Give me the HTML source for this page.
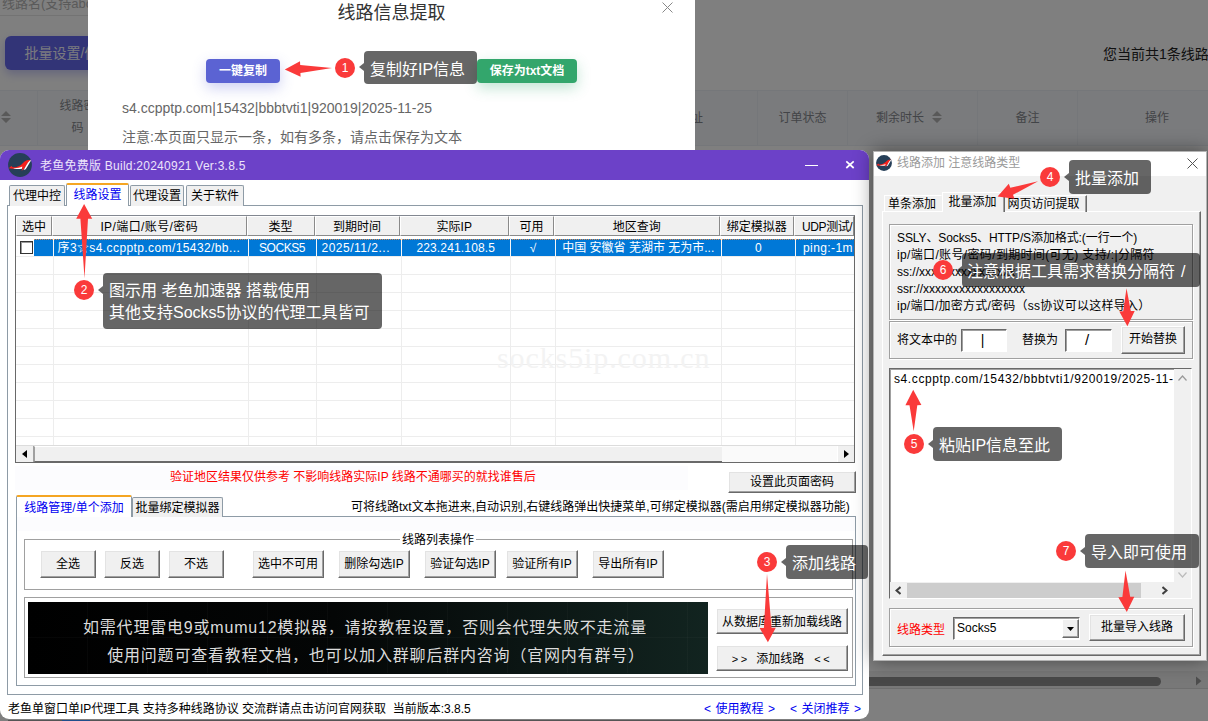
<!DOCTYPE html>
<html lang="zh-CN">
<head>
<meta charset="utf-8">
<title>线路信息提取</title>
<style>
*{box-sizing:border-box;margin:0;padding:0}
html,body{width:1208px;height:721px;overflow:hidden;background:#fff}
body{position:relative;font-family:"Liberation Sans","Noto Sans CJK SC",sans-serif;font-size:12px;color:#000}
.abs{position:absolute}
.nw{white-space:nowrap}
/* ---------- web page ---------- */
#web{position:absolute;left:0;top:0;width:1208px;height:721px;background:#fff;overflow:hidden}
#mask{position:absolute;left:0;top:0;width:1208px;height:721px;background:rgba(0,0,0,.5)}
.th{position:absolute;top:90px;height:56px;border-right:1px solid #ebeef5;color:#85888e;font-size:12px;text-align:center;line-height:56px}
/* ---------- modal ---------- */
#modal{position:absolute;left:88px;top:0;width:607px;height:160px;background:#fff}
/* ---------- win app generic ---------- */
.win{font-family:"Liberation Sans","Noto Sans CJK SC",sans-serif;font-size:12px;line-height:16px;color:#000}
.btn{position:absolute;background:#f0f0f0;border:1px solid;border-color:#fff #696969 #696969 #fff;box-shadow:inset -1px -1px 0 #a0a0a0,inset 1px 1px 0 #e3e3e3;text-align:center;white-space:nowrap;font-size:12px}
.tab{position:absolute;background:#f0f0f0;border:1px solid #8e9ba6;border-bottom:none;border-radius:2px 2px 0 0;text-align:center;white-space:nowrap;font-size:12px}
.hd{position:absolute;top:0;height:20px;line-height:20px;font-size:12px;white-space:nowrap;overflow:hidden;background:#f0f0f0;border-left:1px solid #fff;border-right:1px solid #8a8a8a;border-top:1px solid #fff;border-bottom:1px solid #8a8a8a}
.cl{position:absolute;top:23px;height:17px;line-height:18px;font-size:12px;white-space:nowrap;overflow:hidden;color:#fff;border-left:1px solid #f6f6f6}
/* ---------- annotations ---------- */
.tip{position:absolute;background:rgba(0,0,0,.6);color:#fff;border-radius:4px;font-size:16px;line-height:32px;padding:3px 0 0 6px;white-space:nowrap;font-family:"Liberation Sans","Noto Sans CJK SC",sans-serif}
.tip:before{content:"";position:absolute;left:-5px;top:50%;margin-top:-4.5px;border:4.5px solid transparent;border-left:none;border-right:5px solid rgba(0,0,0,.6)}
.tip.two:before{top:17px}
.num{position:absolute;width:20px;height:20px;border-radius:50%;background:#fa3a3a;color:#fff;font-size:12px;line-height:20px;text-align:center;font-family:"Liberation Sans",sans-serif}
</style>
</head>
<body>
<!-- ================= WEB PAGE (dimmed) ================= -->
<div id="web">
  <div class="abs nw" style="left:2px;top:-7px;font-size:13px;color:#b5b5b5">线路名(支持abc</div>
  <div class="abs" style="left:0;top:15px;width:200px;height:1px;background:#e6e6e6"></div>
  <div class="abs nw" style="left:5px;top:36px;width:140px;height:34px;border-radius:6px;background:#6468ee;color:#f4f4ff;font-size:14px;line-height:34px;padding-left:19.5px;box-shadow:0 4px 10px rgba(100,104,238,.35)">批量设置/修改</div>
  <div class="abs nw" style="left:1103px;top:43px;font-size:14px;color:#222">您当前共1条线路</div>
  <div class="abs" style="left:0;top:90px;width:1208px;height:56px;background:#f5f7fa;border-top:1px solid #ebeef5;border-bottom:1px solid #ebeef5"></div>
  <div class="th" style="left:0;width:38px"></div>
  <div class="th" style="left:38px;width:80px;line-height:22px;padding-top:5px">线路密<br>码</div>
  <div class="th" style="left:601px;width:157px;text-align:left;padding-left:78px">地址</div>
  <div class="th" style="left:758px;width:90px">订单状态</div>
  <div class="th" style="left:848px;width:130px;text-align:left;padding-left:28px">剩余时长</div>
  <div class="th" style="left:978px;width:100px">备注</div>
  <div class="th" style="left:1077px;width:160px;border:none">操作</div>
  <!-- sort carets -->
  <svg class="abs" style="left:1px;top:111px" width="10" height="12"><path d="M0 5 L5 0 L10 5Z M0 7 L5 12 L10 7Z" fill="#b2b2b2"/></svg>
  <svg class="abs" style="left:932px;top:111px" width="10" height="12"><path d="M0 5 L5 0 L10 5Z M0 7 L5 12 L10 7Z" fill="#b2b2b2"/></svg>
  <!-- horizontal scrollbar -->
  <div class="abs" style="left:0;top:671px;width:1208px;height:17px;background:#f1f1f1"></div>
  <div class="abs" style="left:600px;top:677px;width:561px;height:9px;border-radius:5px;background:#909090"></div>
  <svg class="abs" style="left:1196px;top:676px" width="6" height="10"><path d="M0 0.5 L5.5 5 L0 9.5Z" fill="#9a9a9a"/></svg>
  <div class="abs" style="left:0;top:688px;width:1208px;height:1px;background:#dcdcdc"></div>
</div>
<div id="mask"></div>
<div class="abs" style="left:8px;top:720px;width:852px;height:1px;background:#555"></div>
<div class="abs" style="left:62px;top:720px;width:28px;height:1px;background:#1f4e8c"></div>

<!-- ================= MODAL ================= -->
<div id="modal">
  <div class="abs nw" style="left:0;width:607px;top:-2px;text-align:center;font-size:18px;color:#333">线路信息提取</div>
  <svg class="abs" style="left:574px;top:2px" width="11" height="11"><path d="M0.5 0.5 L10.5 10.5 M10.5 0.5 L0.5 10.5" stroke="#888" stroke-width="1" fill="none"/></svg>
  <div class="abs nw" style="left:118px;top:59px;width:74px;height:24px;border-radius:4px;background:#5b63d3;color:#fff;font-size:12px;font-weight:bold;line-height:24px;text-align:center;box-shadow:0 5px 14px rgba(91,99,211,.3)">一键复制</div>
  <div class="abs nw" style="left:389px;top:59px;width:100px;height:24px;border-radius:4px;background:#33a66c;color:#fff;font-size:12px;font-weight:bold;line-height:24px;text-align:center;box-shadow:0 5px 14px rgba(51,166,108,.3)">保存为txt文档</div>
  <div class="abs nw" style="left:34px;top:98px;font-size:14px;color:#666;line-height:20px">s4.ccpptp.com|15432|bbbtvti1|920019|2025-11-25</div>
  <div class="abs nw" style="left:34px;top:127px;font-size:14px;color:#666;line-height:20px">注意:本页面只显示一条，如有多条，请点击保存为文本</div>
</div>

<!-- ================= MAIN WINDOW ================= -->
<div id="mw" class="win abs" style="left:0;top:150px;width:869px;height:569px;background:#fff;border-radius:9px 9px 9px 9px;overflow:hidden">
  <!-- title bar -->
  <div class="abs" style="left:0;top:0;width:869px;height:30px;background:#6c41c8"></div>
  <svg class="abs" style="left:8px;top:3px" width="24" height="24" viewBox="0 0 24 24">
    <circle cx="12" cy="12" r="11.9" fill="#263f58"/>
    <path d="M0.8 15.2 L3.3 12.9 L4.7 14.2 C8 14.5 11 13.5 13.5 11.4 C15.5 9.5 17.5 7.3 20 7 L22.9 7 C20.5 8.6 19 11 17.6 13.6 C16.6 15.5 15.6 17 13.5 17.7 L14.5 15.6 C10 16.4 5 15.9 0.8 15.2Z" fill="#f5201c"/>
    <path d="M23.2 7.3 C21.2 10 19.7 13.5 17.7 16.3 L15.6 16.9 C17.6 14 19.2 10 21.8 7.6Z" fill="#fff"/>
    <path d="M5.2 15 C8 15.2 11.5 15 14.3 13.6 L13.9 15.7 C10 16.3 7 16 5.2 15Z" fill="#fff"/>
  </svg>
  <div class="abs nw" style="left:40px;top:8px;font-size:12px;color:#ece4fb;letter-spacing:.25px">老鱼免费版 Build:20240921 Ver:3.8.5</div>
  <div class="abs" style="left:805px;top:15px;width:13px;height:1px;background:#fff"></div>
  <svg class="abs" style="left:845px;top:10px" width="10" height="10"><path d="M1.3 1.4 L8.7 8 M8.7 1.4 L1.3 8" stroke="#fff" stroke-width="1.7" fill="none"/></svg>

  <!-- outer tab panel -->
  <div class="abs" style="left:7px;top:55px;width:856px;height:490px;border:1px solid #8e9ba6;background:#fff"></div>
  <!-- tabs -->
  <div class="tab" style="left:9px;top:35px;width:56px;height:21px;line-height:20px">代理中控</div>
  <div class="tab" style="left:130px;top:35px;width:54px;height:21px;line-height:20px">代理设置</div>
  <div class="tab" style="left:186px;top:35px;width:58px;height:21px;line-height:20px">关于软件</div>
  <div class="tab" style="left:66px;top:33px;width:63px;height:23px;line-height:21px;background:#fff;color:#0000f0;border-top:2px solid #f5a623">线路设置</div>

  <!-- list view -->
  <div id="lv" class="abs" style="left:15px;top:65px;width:840px;height:248px;border:1px solid #696969;border-top-color:#828790;background:#fff;overflow:hidden">
    <!-- header -->
    <div class="abs" style="left:0;top:0;width:838px;height:20px;background:#f0f0f0;border-bottom:1px solid #8a8a8a"></div>
    <!-- grid -->
    <div class="abs" style="left:0;top:23px;width:838px;height:207px;background:
      repeating-linear-gradient(to bottom,transparent 0,transparent 17px,#ededed 17px,#ededed 18px)"></div>
    <!-- row selected -->
    <div class="abs" style="left:18px;top:23px;width:820px;height:17px;background:#0078d7"></div>
    <div class="abs" style="left:18px;top:23px;width:820px;height:1px;background:repeating-linear-gradient(to right,#e08a4a 0,#e08a4a 1px,#0078d7 1px,#0078d7 2px)"></div>
    <div class="abs" style="left:4px;top:25px;width:13px;height:13px;border:1px solid #333;box-shadow:inset 1px 1px 0 #999;background:#fff"></div>
    <div class="hd" style="left:0px;width:36px;text-align:center;">选中</div>
    <div class="hd" style="left:36px;width:194.5px;text-align:center;letter-spacing:.4px">IP/端口/账号/密码</div>
    <div class="abs" style="left:37px;top:22px;width:1px;height:208px;background:#ededed"></div>
    <div class="cl" style="left:37px;width:194.5px;text-align:left;padding-left:3.5px;letter-spacing:0.4px">序3☆s4.ccpptp.com/15432/bb...</div>
    <div class="hd" style="left:230.5px;width:68.0px;text-align:center;">类型</div>
    <div class="abs" style="left:231.5px;top:22px;width:1px;height:208px;background:#ededed"></div>
    <div class="cl" style="left:231.5px;width:68px;text-align:center;letter-spacing:-.45px">SOCKS5</div>
    <div class="hd" style="left:298.5px;width:85.0px;text-align:center;">到期时间</div>
    <div class="abs" style="left:299.5px;top:22px;width:1px;height:208px;background:#ededed"></div>
    <div class="cl" style="left:299.5px;width:85px;text-align:left;padding-left:5px;letter-spacing:.5px">2025/11/2...</div>
    <div class="hd" style="left:383.5px;width:109.5px;text-align:center;">实际IP</div>
    <div class="abs" style="left:384.5px;top:22px;width:1px;height:208px;background:#ededed"></div>
    <div class="cl" style="left:384.5px;width:109.5px;text-align:center;letter-spacing:.15px">223.241.108.5</div>
    <div class="hd" style="left:493px;width:45px;text-align:center;">可用</div>
    <div class="abs" style="left:494px;top:22px;width:1px;height:208px;background:#ededed"></div>
    <div class="cl" style="left:494px;width:45px;text-align:center;">√</div>
    <div class="hd" style="left:538px;width:165.5px;text-align:center;">地区查询</div>
    <div class="abs" style="left:539px;top:22px;width:1px;height:208px;background:#ededed"></div>
    <div class="cl" style="left:539px;width:165.5px;text-align:center;">中国 安徽省 芜湖市 无为市...</div>
    <div class="hd" style="left:703.5px;width:74.5px;text-align:center;">绑定模拟器</div>
    <div class="abs" style="left:704.5px;top:22px;width:1px;height:208px;background:#ededed"></div>
    <div class="cl" style="left:704.5px;width:74.5px;text-align:center;">0</div>
    <div class="hd" style="left:778px;width:60px;text-align:left;padding-left:7px;letter-spacing:-0.4px">UDP测试/</div>
    <div class="abs" style="left:779px;top:22px;width:1px;height:208px;background:#ededed"></div>
    <div class="cl" style="left:779px;width:60px;text-align:left;padding-left:7px;letter-spacing:0.4px">ping:-1m</div>
    <!-- watermark -->
    <div class="abs nw" style="left:481px;top:134px;font-family:'Liberation Serif',serif;font-size:30px;color:#f3f3f3;letter-spacing:.9px">socks5ip.com.cn</div>
    <!-- hscroll -->
    <div class="abs" style="left:0;top:229px;width:838px;height:17px;background:#f0f0f0;border-top:1px solid #dcdcdc"></div>
    <div class="abs" style="left:18px;top:230px;width:689px;height:16px;background:#f0f0f0;border:1px solid;border-color:#fff #696969 #696969 #a0a0a0"></div>
    <div class="abs" style="left:706px;top:230px;width:115px;height:16px;background:#fafafa"></div>
    <div class="abs" style="left:0;top:230px;width:18px;height:16px;background:#f0f0f0;border-right:1px solid #a0a0a0"></div>
    <div class="abs" style="left:821px;top:230px;width:17px;height:16px;background:#f0f0f0;border-left:1px solid #fff"></div>
    <svg class="abs" style="left:6px;top:234px" width="5" height="8"><path d="M5 0 L0 4 L5 8Z" fill="#000"/></svg>
    <svg class="abs" style="left:828px;top:234px" width="5" height="8"><path d="M0 0 L5 4 L0 8Z" fill="#000"/></svg>
  </div>

  <!-- red note -->
  <div class="abs" style="left:15px;top:316px;width:673px;height:24px;background:#fcfcfe"></div>
  <div class="abs nw" style="left:170px;top:319px;font-size:12px;color:#f00">验证地区结果仅供参考 不影响线路实际IP 线路不通哪买的就找谁售后</div>
  <div class="btn" style="left:728px;top:321px;width:128px;height:22px;line-height:20px;font-size:12px">设置此页面密码</div>

  <!-- inner tab control -->
  <div class="abs" style="left:16px;top:366px;width:840px;height:170px;border:1px solid #8e9ba6;background:#fff"></div>
  <div class="abs" style="left:17px;top:367px;width:838px;height:14px;background:#fcfcfe"></div>
  <div class="tab" style="left:132px;top:347px;width:91px;height:20px;line-height:21px;font-size:12px">批量绑定模拟器</div>
  <div class="tab" style="left:16px;top:345px;width:116px;height:22px;line-height:22px;background:#fff;color:#0000f0;border-top:2px solid #f5a623;font-size:12px">线路管理/单个添加</div>
  <div class="abs nw" style="left:351px;top:349px;font-size:12px">可将线路txt文本拖进来,自动识别,右键线路弹出快捷菜单,可绑定模拟器(需启用绑定模拟器功能)</div>

  <!-- group box 1 -->
  <div class="abs" style="left:24px;top:389px;width:829px;height:51px;border:1px solid #a0a0a0;box-shadow:1px 1px 0 #fff,inset 1px 1px 0 #fff"></div>
  <div class="abs nw" style="left:400px;top:382px;background:#fff;padding:0 2px;font-size:12px">线路列表操作</div>
  <div class="btn" style="left:40px;top:400px;width:56px;height:28px;line-height:27px">全选</div>
  <div class="btn" style="left:104px;top:400px;width:56px;height:28px;line-height:27px">反选</div>
  <div class="btn" style="left:168px;top:400px;width:56px;height:28px;line-height:27px">不选</div>
  <div class="btn" style="left:252px;top:400px;width:72px;height:28px;line-height:27px">选中不可用</div>
  <div class="btn" style="left:338px;top:400px;width:72px;height:28px;line-height:27px">删除勾选IP</div>
  <div class="btn" style="left:424px;top:400px;width:72px;height:28px;line-height:27px">验证勾选IP</div>
  <div class="btn" style="left:506px;top:400px;width:72px;height:28px;line-height:27px">验证所有IP</div>
  <div class="btn" style="left:592px;top:400px;width:72px;height:28px;line-height:27px">导出所有IP</div>

  <!-- group box 2 -->
  <div class="abs" style="left:24px;top:447px;width:829px;height:81px;border:1px solid #a0a0a0;box-shadow:1px 1px 0 #fff,inset 1px 1px 0 #fff"></div>
  <div class="abs" style="left:28px;top:452px;width:680px;height:72px;background:linear-gradient(to right,#000 0,#040606 45%,#122420 100%);overflow:hidden">
    <div class="abs" style="left:0;top:0;width:680px;height:71px;background:
      repeating-linear-gradient(to right,transparent 0,transparent 59px,rgba(255,255,255,.022) 59px,rgba(255,255,255,.022) 60px),
      repeating-linear-gradient(to bottom,transparent 0,transparent 35px,rgba(255,255,255,.022) 35px,rgba(255,255,255,.022) 36px)"></div>
    <div class="abs nw" style="left:0;top:14px;width:674px;text-align:center;font-size:16px;line-height:24px;color:#dcdcdc;letter-spacing:.8px">如需代理雷电9或mumu12模拟器，请按教程设置，否则会代理失败不走流量</div>
    <div class="abs nw" style="left:0;top:42px;width:696px;text-align:center;font-size:16px;line-height:24px;color:#dcdcdc;letter-spacing:.8px">使用问题可查看教程文档，也可以加入群聊后群内咨询（官网内有群号）</div>
  </div>
  <div class="btn" style="left:716px;top:458px;width:132px;height:26px;line-height:26px">从数据库重新加载线路</div>
  <div class="btn" style="left:716px;top:495px;width:132px;height:26px;line-height:26px"><span style="letter-spacing:2.5px;font-size:11px">&gt;&gt;</span>&nbsp;&nbsp;添加线路&nbsp;&nbsp;&nbsp;<span style="letter-spacing:2.5px;font-size:11px">&lt;&lt;</span></div>

  <!-- status bar -->
  <div class="abs nw" style="left:8px;top:551px;font-size:12px">老鱼单窗口单IP代理工具 支持多种线路协议 交流群请点击访问官网获取&nbsp; 当前版本:3.8.5</div>
  <div class="abs nw" style="left:704px;top:551px;font-size:12px;color:#0000f0;word-spacing:1.2px">&lt; 使用教程 &gt;</div>
  <div class="abs nw" style="left:790px;top:551px;font-size:12px;color:#0000f0;word-spacing:1.2px">&lt; 关闭推荐 &gt;</div>
</div>

<!--MAINWIN_END-->
<!-- ================= RIGHT WINDOW ================= -->
<div id="rw" class="win abs" style="left:873px;top:151px;width:334px;height:510px;background:#f0f0f0;box-shadow:0 0 18px rgba(0,0,0,.45);border:1px solid #b4b4b4">
  <div class="abs" style="left:0;top:0;width:332px;height:24px;background:#fff"></div>
  <svg class="abs" style="left:2px;top:3px" width="16" height="16" viewBox="0 0 24 24">
    <circle cx="12" cy="12" r="11.9" fill="#263f58"/>
    <path d="M0.8 15.2 L3.3 12.9 L4.7 14.2 C8 14.5 11 13.5 13.5 11.4 C15.5 9.5 17.5 7.3 20 7 L22.9 7 C20.5 8.6 19 11 17.6 13.6 C16.6 15.5 15.6 17 13.5 17.7 L14.5 15.6 C10 16.4 5 15.9 0.8 15.2Z" fill="#f5201c"/>
    <path d="M23.2 7.3 C21.2 10 19.7 13.5 17.7 16.3 L15.6 16.9 C17.6 14 19.2 10 21.8 7.6Z" fill="#fff"/>
    <path d="M5.2 15 C8 15.2 11.5 15 14.3 13.6 L13.9 15.7 C10 16.3 7 16 5.2 15Z" fill="#fff"/>
  </svg>
  <div class="abs nw" style="left:23px;top:3px;font-size:12px;color:#9a9a9a">线路添加 注意线路类型</div>
  <svg class="abs" style="left:313px;top:6px" width="11" height="11"><path d="M0.5 0.5 L10.5 10.5 M10.5 0.5 L0.5 10.5" stroke="#555" stroke-width="1" fill="none"/></svg>

  <!-- tab panel -->
  <div class="abs" style="left:8px;top:59px;width:319px;height:445px;border:1px solid;border-color:#fff #696969 #696969 #fff;box-shadow:inset -1px -1px 0 #a0a0a0"></div>
  <!-- tabs -->
  <div class="abs nw" style="left:10px;top:43px;width:58px;height:17px;border:1px solid;border-color:#fff transparent transparent #fff;padding-right:2px;border-bottom:none;font-size:12px;line-height:16px;text-align:center">单条添加</div>
  <div class="abs nw" style="left:130px;top:43px;width:83px;height:17px;padding-right:4px;border:1px solid;border-color:#fff #696969 transparent #fff;border-bottom:none;font-size:12px;line-height:16px;text-align:center;box-shadow:inset -1px 0 0 #a0a0a0">网页访问提取</div>
  <div class="abs nw" style="left:68px;top:40px;width:63px;height:20px;padding-right:2px;background:#f0f0f0;border:1px solid;border-color:#fff #696969 transparent #fff;border-bottom:none;font-size:12px;line-height:18px;text-align:center;box-shadow:inset -1px 0 0 #a0a0a0">批量添加</div>

  <!-- group 1 -->
  <div class="abs" style="left:15px;top:72px;width:304px;height:96px;border:1px solid #a0a0a0;box-shadow:1px 1px 0 #fff,inset 1px 1px 0 #fff"></div>
  <div class="abs nw" style="left:23px;top:78px;font-size:12px;line-height:17px"><span style="letter-spacing:-.1px">SSLY、Socks5、HTTP/S添加格式:(一行一个)</span><br><span style="letter-spacing:.35px">ip/端口/账号/密码/到期时间(可无) 支持/:|分隔符</span><br>ss://xxxxxxxxxxxxxxxx<br>ssr://xxxxxxxxxxxxxxxxx<br><span style="letter-spacing:.25px">ip/端口/加密方式/密码（ss协议可以这样导入）</span></div>

  <!-- group 2 -->
  <div class="abs" style="left:15px;top:169px;width:304px;height:38px;border:1px solid #a0a0a0;box-shadow:1px 1px 0 #fff,inset 1px 1px 0 #fff"></div>
  <div class="abs nw" style="left:23px;top:180px;font-size:12px">将文本中的</div>
  <div class="abs" style="left:87px;top:177px;width:46px;height:23px;background:#fff;border:1px solid;border-color:#696969 #fff #fff #696969;box-shadow:inset 1px 1px 0 #a0a0a0;text-align:center;line-height:20px;font-size:14px;padding-right:3px">|</div>
  <div class="abs nw" style="left:148px;top:180px;font-size:12px">替换为</div>
  <div class="abs" style="left:191px;top:177px;width:47px;height:23px;background:#fff;border:1px solid;border-color:#696969 #fff #fff #696969;box-shadow:inset 1px 1px 0 #a0a0a0;text-align:center;line-height:20px;font-size:15px;padding-right:3px">/</div>
  <div class="btn" style="left:247px;top:174px;width:64px;height:28px;line-height:25px">开始替换</div>

  <!-- textarea -->
  <div class="abs" style="left:15px;top:216px;width:303px;height:231px;background:#fff;border:1px solid;border-color:#696969 #fff #fff #696969;box-shadow:inset 1px 1px 0 #a0a0a0;overflow:hidden">
    <div class="abs nw" style="left:4px;top:2px;font-size:12px;letter-spacing:.6px">s4.ccpptp.com/15432/bbbtvti1/920019/2025-11-25</div>
    <div class="abs" style="left:284px;top:0;width:17px;height:213px;background:#f0f0f0"></div>
    <div class="abs" style="left:0;top:213px;width:301px;height:17px;background:#f0f0f0"></div>
    <div class="abs" style="left:17px;top:214px;width:234px;height:15px;background:#cdcdcd"></div>
    <svg class="abs" style="left:288px;top:6px" width="9" height="6"><path d="M0.5 5.5 L4.5 1 L8.5 5.5" stroke="#999" stroke-width="1.2" fill="none"/></svg>
    <svg class="abs" style="left:288px;top:203px" width="9" height="6"><path d="M0.5 0.5 L4.5 5 L8.5 0.5" stroke="#bbb" stroke-width="1.2" fill="none"/></svg>
    <svg class="abs" style="left:5px;top:217px" width="6" height="9"><path d="M5.5 1 L1.5 4.5 L5.5 8" stroke="#404040" stroke-width="2" fill="none"/></svg>
    <svg class="abs" style="left:272px;top:217px" width="6" height="9"><path d="M0.5 1 L4.5 4.5 L0.5 8" stroke="#404040" stroke-width="2" fill="none"/></svg>
  </div>

  <!-- group 3 -->
  <div class="abs" style="left:15px;top:456px;width:304px;height:39px;border:1px solid #a0a0a0;box-shadow:1px 1px 0 #fff,inset 1px 1px 0 #fff"></div>
  <div class="abs nw" style="left:23px;top:470px;font-size:12px;color:#f00">线路类型</div>
  <div class="abs" style="left:79px;top:465px;width:127px;height:23px;background:#fff;border:1px solid;border-color:#696969 #fff #fff #696969;box-shadow:inset 1px 1px 0 #a0a0a0">
    <div class="abs nw" style="left:3px;top:2px;font-size:12px">Socks5</div>
    <div class="abs" style="left:108px;top:1px;width:17px;height:19px;background:#f0f0f0;border:1px solid;border-color:#fff #696969 #696969 #fff;box-shadow:inset -1px -1px 0 #a0a0a0"></div>
    <svg class="abs" style="left:113px;top:9px" width="7" height="4"><path d="M0 0 L7 0 L3.5 4Z" fill="#000"/></svg>
  </div>
  <div class="btn" style="left:215px;top:462px;width:96px;height:27px;line-height:24px">批量导入线路</div>
</div>

<!--RIGHTWIN_END-->
<!-- ================= ANNOTATIONS ================= -->
<svg class="abs" style="left:0;top:0;pointer-events:none" width="1208" height="721">
  <g fill="#fa3a3a">
    <path d="M332.0 67.9 L300.2 64.9 L300.0 61.2 L284.8 69.5 L300.6 76.8 L300.4 73.1Z"/>
    <path d="M84.5 278.2 L88.0 218.7 L92.2 218.7 L84.1 203.9 L76.2 218.7 L80.4 218.7Z"/>
    <path d="M767.0 573.8 L763.9 627.9 L759.6 627.9 L767.9 642.3 L775.8 627.7 L771.5 627.8Z"/>
    <path d="M1038.1 181.3 L1010.3 187.7 L1008.8 183.7 L997.6 196.5 L1014.5 198.7 L1013.0 194.8Z"/>
    <path d="M913.7 431.3 L917.3 405.2 L921.4 405.1 L913.2 389.7 L905.4 405.3 L909.5 405.2Z"/>
    <path d="M1126.5 288.3 L1123.2 311.3 L1119.3 311.4 L1127.4 326.2 L1134.7 311.0 L1130.8 311.1Z"/>
    <path d="M1125.5 570.6 L1122.4 597.0 L1118.3 597.2 L1126.8 612.0 L1134.3 596.7 L1130.2 596.8Z"/>
  </g>
</svg>
<div class="num" style="left:335px;top:58px">1</div>
<div class="tip" style="left:364px;top:51px;width:113px;height:33px">复制好IP信息</div>
<div class="num" style="left:74px;top:280px">2</div>
<div class="tip two" style="left:103px;top:273px;width:279px;height:56px;line-height:22px;padding-top:7px">图示用 老鱼加速器 搭载使用<br>其他支持Socks5协议的代理工具皆可</div>
<div class="num" style="left:757px;top:552px">3</div>
<div class="tip" style="left:786px;top:545px;width:82px;height:34px">添加线路</div>
<div class="num" style="left:1040px;top:167px">4</div>
<div class="tip" style="left:1069px;top:160px;width:82px;height:34px">批量添加</div>
<div class="num" style="left:904px;top:434px">5</div>
<div class="tip" style="left:933px;top:427px;width:129px;height:34px">粘贴IP信息至此</div>
<div class="num" style="left:933px;top:260px">6</div>
<div class="tip" style="left:962px;top:253px;width:238px;height:34px;padding-left:5px;word-spacing:1.5px">注意根据工具需求替换分隔符 /</div>
<div class="num" style="left:1056px;top:541px">7</div>
<div class="tip" style="left:1085px;top:534px;width:114px;height:34px">导入即可使用</div>
<!--ANNOT_END-->
</body>
</html>
